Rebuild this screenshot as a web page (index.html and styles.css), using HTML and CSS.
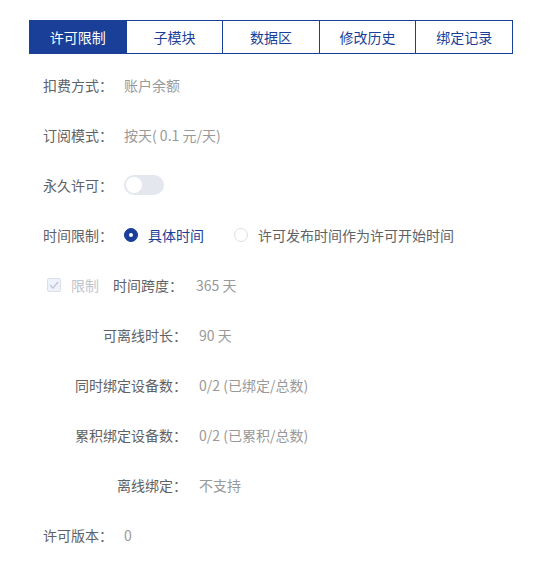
FILE: index.html
```html
<!DOCTYPE html>
<html lang="zh-CN">
<head>
<meta charset="utf-8">
<link rel="stylesheet" href="styles.css">
</head>
<body>
<div class="page">
  <div class="tabs">
    <div class="tab active">许可限制</div>
    <div class="tab">子模块</div>
    <div class="tab">数据区</div>
    <div class="tab">修改历史</div>
    <div class="tab">绑定记录</div>
  </div>
  <div class="form">
    <div class="row">
      <div class="label">扣费方式：</div>
      <div class="value">账户余额</div>
    </div>
    <div class="row">
      <div class="label">订阅模式：</div>
      <div class="value">按天( 0.1 元/天)</div>
    </div>
    <div class="row">
      <div class="label">永久许可：</div>
      <div class="switch"><span class="knob"></span></div>
    </div>
    <div class="row">
      <div class="label">时间限制：</div>
      <div class="radio checked"><span class="dot"></span><span class="radio-text">具体时间</span></div>
      <div class="radio"><span class="dot"></span><span class="radio-text">许可发布时间作为许可开始时间</span></div>
    </div>
    <div class="row">
      <div class="check">
        <span class="box"><svg width="10" height="8" viewBox="0 0 10 8"><path d="M1 4 L4 7 L9 1" fill="none" stroke="#c0c4cc" stroke-width="1.2"/></svg></span>
        <span class="check-text">限制</span>
      </div>
      <div class="label span-label">时间跨度：</div>
      <div class="value span-value">365 天</div>
    </div>
    <div class="row">
      <div class="label wide">可离线时长：</div>
      <div class="value">90 天</div>
    </div>
    <div class="row">
      <div class="label wide">同时绑定设备数：</div>
      <div class="value">0/2 (已绑定/总数)</div>
    </div>
    <div class="row">
      <div class="label wide">累积绑定设备数：</div>
      <div class="value">0/2 (已累积/总数)</div>
    </div>
    <div class="row">
      <div class="label wide">离线绑定：</div>
      <div class="value">不支持</div>
    </div>
    <div class="row">
      <div class="label">许可版本：</div>
      <div class="value">0</div>
    </div>
  </div>
</div>
</body>
</html>
```

FILE: styles.css
```css
* { box-sizing: border-box; }
html, body { margin: 0; padding: 0; background: #ffffff; }
body {
  font-family: "Noto Sans CJK SC", "Liberation Sans", sans-serif;
  font-size: 14px;
  color: #606266;
}
.page { padding: 20px 41px 0 29px; }
.tabs {
  display: flex;
  height: 34px;
  border: 1px solid #1a3f98;
  margin-bottom: 11px;
}
.tab {
  flex: 1;
  display: flex;
  align-items: center;
  justify-content: center;
  color: #1a3f98;
  border-left: 1px solid #1a3f98;
  font-size: 14px;
}
.tab:first-child { border-left: none; }
.tab.active { background: #1a3f98; color: #ffffff; }
.form { padding-left: 14px; display: flex; flex-direction: column; gap: 10px; }
.row { display: flex; align-items: center; height: 40px; line-height: 40px; }
.label { width: 81px; padding-right: 11px; color: #606266; white-space: nowrap; }
.label.wide { width: 156px; text-align: right; padding-right: 12px; }
.value { color: #999999; white-space: nowrap; }
.switch {
  width: 40px; height: 20px; border-radius: 10px; background: #e4e7ed;
  display: flex; align-items: center; padding-left: 2px;
}
.knob { width: 16px; height: 16px; border-radius: 50%; background: #ffffff; }
.radio { display: flex; align-items: center; margin-right: 30px; color: #606266; }
.radio .dot {
  width: 14px; height: 14px; border-radius: 50%; border: 1px solid #dcdfe6;
  background: #fff; margin-right: 10px; display: flex; align-items: center; justify-content: center;
}
.radio.checked { color: #1a3f98; }
.radio.checked .dot { background: #1a3f98; border-color: #1a3f98; }
.radio.checked .dot::after {
  content: ""; width: 4px; height: 4px; border-radius: 50%; background: #fff;
}
.check { display: flex; align-items: center; margin-left: 4px; }
.box {
  width: 14px; height: 14px; border: 1px solid #dcdfe6; background: #edf2fc;
  border-radius: 2px; display: flex; align-items: center; justify-content: center;
  margin-right: 10px;
}
.check-text { color: #c0c4cc; margin-right: 14px; }
.span-label { width: auto; padding-right: 13px; }
```
